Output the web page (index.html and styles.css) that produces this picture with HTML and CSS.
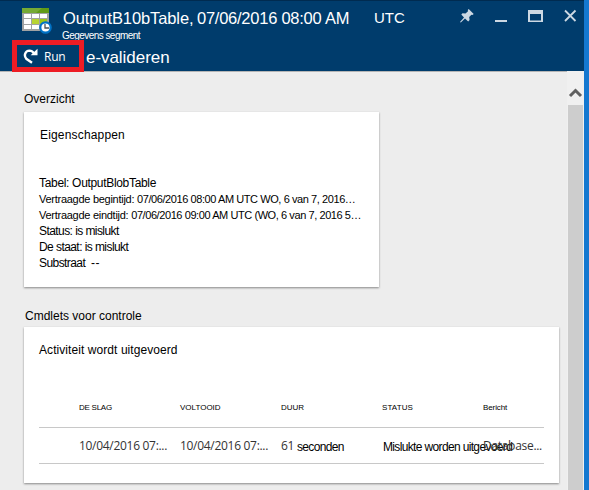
FILE: index.html
```html
<!DOCTYPE html>
<html lang="nl">
<head>
<meta charset="utf-8">
<title>OutputB10bTable</title>
<link rel="stylesheet" href="styles.css">
</head>
<body>
<div class="blade">
  <header class="header">
    <div class="titlebar">
      <svg class="table-icon" width="32" height="28" viewBox="0 0 32 28">
        <rect x="0" y="0" width="27" height="23" fill="#a0a2a3"/>
        <rect x="0" y="0" width="27" height="5" fill="#5f9a16"/>
        <path d="M0 5V0h20L14 5z" fill="#76aa35"/>
        <path d="M2 6h7v4H2zM10 6h7v4h-7zM18 6h7v4h-7zM2 17h7v4H2zM10 17h7v4h-7zM18 17h7v4h-7z" fill="#fff"/>
        <path d="M2 11h7v5H2z" fill="#fff"/>
        <path d="M10 11h7v5h-7z" fill="#b8d432"/>
        <path d="M18 11h7v5h-7z" fill="#9bc514"/>
        <circle cx="23.5" cy="19.5" r="5.2" fill="#fff" stroke="#0072c6" stroke-width="2.2"/>
        <path d="M23 16v4h4" fill="none" stroke="#4b5258" stroke-width="1.3"/>
      </svg>
      <div class="titles">
        <div class="title"><span class="title-name">OutputB10bTable,</span><span class="title-date">07/06/2016 08:00 AM</span><span class="zone">UTC</span></div>
        <div class="subtitle">Gegevens segment</div>
      </div>
      <div class="window-buttons">
        <svg width="112" height="20" viewBox="0 0 112 20">
          <g fill="#ccd8e3">
            <path d="M8.700 1l5 5-1.300 1-1-.3-2.200 2.400.4 3-1.400 1.300-3.200-3L.8 14.600l-.8-.6 4-4.600-2.700-2.800 1.200-1.300 3 .2 2.500-2.300-.2-1.200z"/>
            <rect x="35" y="12" width="12" height="2"/>
            <path d="M68 2h15v12H68zM70 6v6.500h11V6z" fill-rule="evenodd"/>
          </g>
          <path d="M105 2.500l10.500 10.500M115.500 2.500L105 13" stroke="#ccd8e3" stroke-width="1.8"/>
        </svg>
      </div>
    </div>
    <div class="commands">
      <div class="run">
        <svg width="15" height="16" viewBox="0 0 15 16"><path d="M9 14.800L3.300 10.800C.6 7.500 2 2.800 6.500 2.600c2 0 3.300 1 4.300 2.600" fill="none" stroke="#fff" stroke-width="2.400"/><path d="M14.500 .8V7.300H7.600z" fill="#fff"/></svg>
        <span>Run</span>
      </div>
      <span class="validate">e-valideren</span>
    </div>
  </header>
  <div class="body">
    <main class="content">
      <h2 class="heading overview">Overzicht</h2>
      <section class="card properties">
        <h3 class="card-title props-title">Eigenschappen</h3>
        <div class="line table-name">Tabel: OutputBlobTable</div>
        <div class="line start">Vertraagde begintijd: <span class="date">07/06/2016 08:00 AM UTC WO, 6 van 7, 2016…</span></div>
        <div class="line end">Vertraagde eindtijd: <span class="date">07/06/2016 09:00 AM UTC (WO, 6 van 7, 2016 5…</span></div>
        <div class="line status">Status: is mislukt</div>
        <div class="line state">De staat: is mislukt</div>
        <div class="line substrate">Substraat <span class="dashes">--</span></div>
      </section>
      <h2 class="heading monitor">Cmdlets voor controle</h2>
      <section class="card activity">
        <h3 class="card-title activity-title">Activiteit wordt uitgevoerd</h3>
        <div class="row head">
          <span></span><span class="h-start">DE SLAG</span><span>VOLTOOID</span><span>DUUR</span><span class="h-status">STATUS</span><span class="h-message">Bericht</span>
        </div>
        <div class="row values">
          <span></span><span>10/04/2016 07:...</span><span>10/04/2016 07:...</span><span>61 <span class="seconds">seconden</span></span><span class="failed">Mislukte worden uitgevoerd</span><span class="message">Database...</span>
        </div>
      </section>
    </main>
    <div class="scrollbar">
      <svg width="17" height="34" viewBox="0 0 17 34"><path d="M3 25L8.500 19.500L14 25" fill="none" stroke="#606060" stroke-width="3"/></svg>
      <div class="thumb"></div>
    </div>
  </div>
</div>
</body>
</html>
```
FILE: styles.css
```css
* { box-sizing: border-box; }
body { margin: 0; overflow: hidden; font-family: "Liberation Sans", sans-serif; color: #000; }
h2, h3 { margin: 0; font-weight: 400; }
span, div, h2, h3 { white-space: nowrap; }
.blade { width: 589px; height: 490px; border-right: 5px solid #1478d0; display: flex; flex-direction: column; }
.header { height: 71px; background: #003c6c; border-top: 1px solid #002b50; color: #fff; flex: none; }
.titlebar { display: flex; height: 40px; }
.table-icon { margin: 7px 0 0 22px; flex: none; }
.titles { width: 398px; margin-left: 8px; padding-top: 5px; flex: none; }
.title { height: 24px; line-height: 24px; font-size: 16.500px; display: flex; }
.title-name { width: 134px; margin-left: 1px; letter-spacing: -0.1px; }
.title-date { width: 177px; letter-spacing: -0.25px; }
.zone { font-size: 15px; }
.subtitle { font-size: 10px; line-height: 12px; letter-spacing: -0.55px; }
.window-buttons { padding-top: 7px; }
.window-buttons svg { display: block; overflow: visible; }
.commands { display: flex; height: 30px; }
.run { width: 72px; height: 32px; margin: -1px 2px 0 12px; border: 5px solid #ed1c24; display: flex; align-items: center; padding-left: 6px; flex: none; font: 12px "Open Sans", sans-serif; position: relative; }
.run span { margin-left: 6px; letter-spacing: -0.2px; }
.validate { font-size: 17px; line-height: 34px; letter-spacing: -0.05px; }
.body { display: flex; flex: 1; min-height: 0; background: #ededed; }
.content { width: 567px; flex: none; padding: 0 8px 0 24px; border-top: 1px solid #b5b5b5; }
.scrollbar { width: 17px; background: #f0f0f0; display: flex; flex-direction: column; }
.scrollbar svg { display: block; flex: none; }
.thumb { flex: 1; margin: 0 1px; background: #cdcdcd; }
.heading { font-size: 12px; }
.overview { height: 40px; padding-top: 20px; line-height: 14px; }
.card { background: #fff; box-shadow: 0 1px 2px #888; }
.properties { width: 355px; height: 175px; padding: 15px 0 0 15px; }
.card-title { font-size: 12px; line-height: 16px; }
.props-title { height: 48px; padding-left: 1px; letter-spacing: 0.17px; }
.line { height: 16px; line-height: 16px; font-size: 12px; }
.table-name { letter-spacing: -0.32px; }
.start, .end { font-size: 11px; letter-spacing: -0.27px; }
.date { letter-spacing: -0.42px; }
.status, .state, .substrate { letter-spacing: -0.57px; }
.dashes { margin-left: 3px; letter-spacing: 0.6px; }
.monitor { height: 40px; line-height: 14px; padding: 22px 0 0 1px; }
.activity { width: 535px; height: 156px; padding: 15px 15px 0; }
.activity-title { height: 50px; letter-spacing: 0.07px; }
.row { display: grid; grid-template-columns: 40px 101px 101px 102px 100px 1fr; border-bottom: 1px solid #c8c8c8; }
.head { height: 36px; line-height: 32px; font-size: 8px; }
.h-start { letter-spacing: -0.25px; }
.h-status { margin-left: -1px; letter-spacing: 0.1px; }
.h-message { letter-spacing: -0.1px; }
.values { height: 36px; font: 12px/36px "Open Sans", sans-serif; color: #333; letter-spacing: -0.3px; }
.seconds { font: 12px "Liberation Sans", sans-serif; color: #000; letter-spacing: -0.65px; position: relative; top: 1px; }
.failed { font: 12px/38px "Liberation Sans", sans-serif; color: #000; letter-spacing: -0.65px; }
```
